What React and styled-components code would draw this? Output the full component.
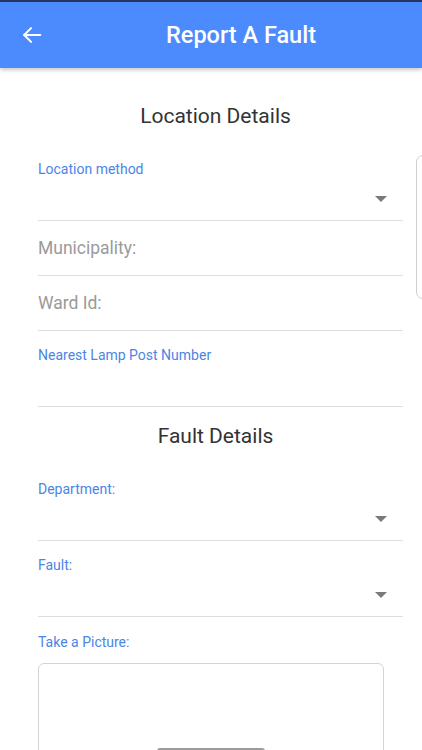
import React from "react";
import styled, { createGlobalStyle } from "styled-components";

const GlobalStyle = createGlobalStyle`
  html, body {
    margin: 0;
    padding: 0;
    background: #fff;
    font-family: Roboto, "Noto Sans", sans-serif;
  }
  #root {
    height: 750px;
    overflow: hidden;
  }
`;

const Screen = styled.div`
  position: relative;
  width: 422px;
  height: 750px;
  overflow: hidden;
  background: #fff;
`;

const Header = styled.header`
  display: flex;
  align-items: center;
  height: 66px;
  border-top: 2px solid #26355f;
  background: #4b8bfd;
  box-shadow: 0 2px 4px rgba(0, 0, 0, 0.22);
  position: relative;
  z-index: 2;
`;

const BackButton = styled.div`
  width: 60px;
  display: flex;
  justify-content: flex-start;
  padding-left: 21px;
  box-sizing: border-box;
  margin-top: -1px;
`;

const Title = styled.h1`
  flex: 1;
  margin: 0;
  text-align: center;
  color: #fff;
  font-size: 23.5px;
  font-weight: 500;
  margin-top: -1px;
`;

const Content = styled.div`
  padding: 18px 19px 0 38px;
`;

const SectionTitle = styled.h2`
  margin: 0 -19px 0 -23px;
  padding: ${(p) => (p.first ? "18px" : "17px")} 6px 17px 0;
  text-align: center;
  font-size: 21px;
  line-height: 24px;
  font-weight: 400;
  color: #333;
`;

const Field = styled.div`
  padding-top: ${(p) => (p.label ? "16px" : "0")};
  border-bottom: 1px solid #dedede;
`;

const Label = styled.div`
  font-size: 14px;
  line-height: 16px;
  color: #4a86e4;
`;

const Control = styled.div`
  height: ${(p) => p.h}px;
  display: flex;
  align-items: center;
  justify-content: flex-end;
  padding-right: 16px;
`;

const Placeholder = styled.div`
  flex: 1;
  font-size: 17.5px;
  color: #9a9a9a;
`;

const Caret = styled.span`
  width: 0;
  height: 0;
  border-left: 6px solid transparent;
  border-right: 6px solid transparent;
  border-top: 6px solid #7a7a7a;
`;

const PictureLabel = styled(Label)`
  padding-top: 17px;
`;

const PictureBox = styled.div`
  margin-top: 13px;
  width: 346px;
  height: 200px;
  box-sizing: border-box;
  border: 1px solid #d4d4d4;
  border-radius: 6px;
  display: flex;
  justify-content: center;
  padding-top: 84px;
`;

const CameraButton = styled.div`
  width: 108px;
  height: 36px;
  border-radius: 3px;
  background: #9b9b9b;
`;

const SideTab = styled.div`
  position: absolute;
  left: 416px;
  top: 155px;
  width: 20px;
  height: 142px;
  border: 1px solid #cfcfcf;
  border-radius: 7px;
  background: #fff;
`;

const BackArrow = () => (
  <svg width="22" height="22" viewBox="0 0 24 24" fill="none" stroke="#fff" strokeWidth="2.2" strokeLinecap="round" strokeLinejoin="round">
    <path d="M21 12H3.5" />
    <path d="M11 4.5L3.5 12l7.5 7.5" />
  </svg>
);

const SelectField = ({ label }) => (
  <Field label>
    <Label>{label}</Label>
    <Control h={43}>
      <Caret />
    </Control>
  </Field>
);

const TextField = ({ placeholder }) => (
  <Field>
    <Control h={54}>
      <Placeholder>{placeholder}</Placeholder>
    </Control>
  </Field>
);

export default function App() {
  return (
    <Screen>
      <GlobalStyle />
      <Header>
        <BackButton>
          <BackArrow />
        </BackButton>
        <Title>Report A Fault</Title>
      </Header>
      <Content>
        <SectionTitle first>Location Details</SectionTitle>
        <SelectField label="Location method" />
        <TextField placeholder="Municipality:" />
        <TextField placeholder="Ward Id:" />
        <Field label>
          <Label>Nearest Lamp Post Number</Label>
          <Control h={43} />
        </Field>
        <SectionTitle>Fault Details</SectionTitle>
        <SelectField label="Department:" />
        <SelectField label="Fault:" />
        <PictureLabel>Take a Picture:</PictureLabel>
        <PictureBox>
          <CameraButton />
        </PictureBox>
      </Content>
      <SideTab />
    </Screen>
  );
}
